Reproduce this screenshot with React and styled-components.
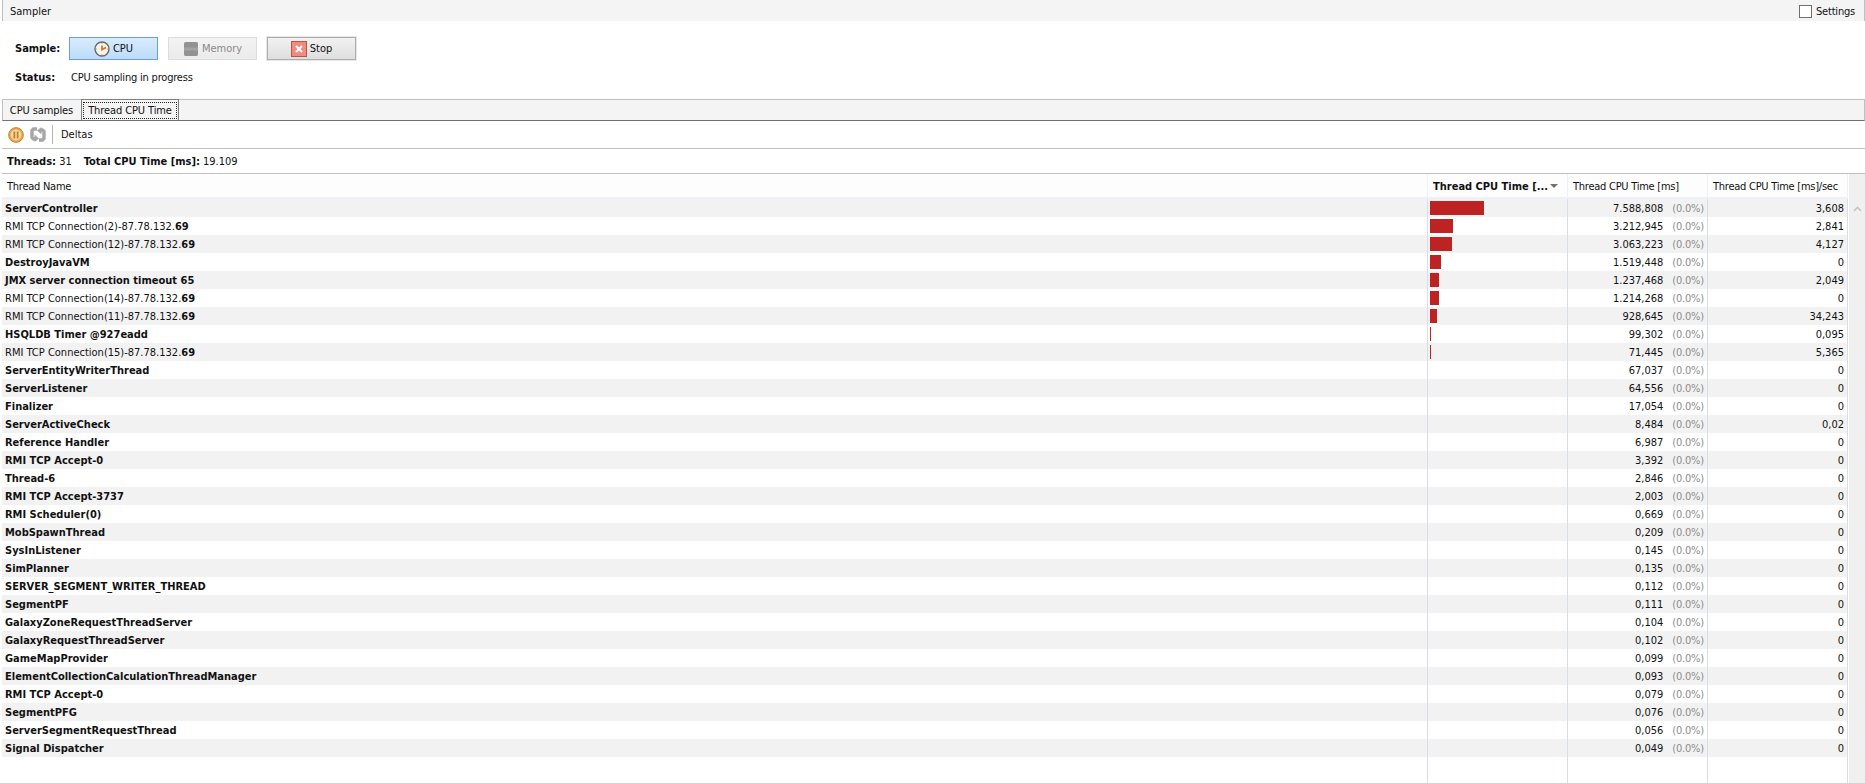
import React from 'react'
import styled, { createGlobalStyle } from 'styled-components'

const GlobalStyle = createGlobalStyle`
  html, body { margin: 0; padding: 0; background: #fff; overflow: hidden; }
  body { font-family: "DejaVu Sans Condensed", "DejaVu Sans", sans-serif; font-stretch: condensed; font-size: 11px; color: #111; }
`

const threads = [
  ['ServerController', 1, 54, '7.588,808', '3,608'],
  ['RMI TCP Connection(2)-87.78.132.', 0, 23, '3.212,945', '2,841'],
  ['RMI TCP Connection(12)-87.78.132.', 0, 22, '3.063,223', '4,127'],
  ['DestroyJavaVM', 1, 11, '1.519,448', '0'],
  ['JMX server connection timeout 65', 1, 9, '1.237,468', '2,049'],
  ['RMI TCP Connection(14)-87.78.132.', 0, 9, '1.214,268', '0'],
  ['RMI TCP Connection(11)-87.78.132.', 0, 7, '928,645', '34,243'],
  ['HSQLDB Timer @927eadd', 1, 1, '99,302', '0,095'],
  ['RMI TCP Connection(15)-87.78.132.', 0, 1, '71,445', '5,365'],
  ['ServerEntityWriterThread', 1, 0, '67,037', '0'],
  ['ServerListener', 1, 0, '64,556', '0'],
  ['Finalizer', 1, 0, '17,054', '0'],
  ['ServerActiveCheck', 1, 0, '8,484', '0,02'],
  ['Reference Handler', 1, 0, '6,987', '0'],
  ['RMI TCP Accept-0', 1, 0, '3,392', '0'],
  ['Thread-6', 1, 0, '2,846', '0'],
  ['RMI TCP Accept-3737', 1, 0, '2,003', '0'],
  ['RMI Scheduler(0)', 1, 0, '0,669', '0'],
  ['MobSpawnThread', 1, 0, '0,209', '0'],
  ['SysInListener', 1, 0, '0,145', '0'],
  ['SimPlanner', 1, 0, '0,135', '0'],
  ['SERVER_SEGMENT_WRITER_THREAD', 1, 0, '0,112', '0'],
  ['SegmentPF', 1, 0, '0,111', '0'],
  ['GalaxyZoneRequestThreadServer', 1, 0, '0,104', '0'],
  ['GalaxyRequestThreadServer', 1, 0, '0,102', '0'],
  ['GameMapProvider', 1, 0, '0,099', '0'],
  ['ElementCollectionCalculationThreadManager', 1, 0, '0,093', '0'],
  ['RMI TCP Accept-0', 1, 0, '0,079', '0'],
  ['SegmentPFG', 1, 0, '0,076', '0'],
  ['ServerSegmentRequestThread', 1, 0, '0,056', '0'],
  ['Signal Dispatcher', 1, 0, '0,049', '0'],
]

const Page = styled.div`
  width: 1865px;
  height: 783px;
  display: flex;
  flex-direction: column;
  overflow: hidden;
  padding-left: 2px;
  box-sizing: border-box;
`
const TitleBar = styled.div`
  height: 21px;
  flex: none;
  display: flex;
  align-items: center;
  justify-content: space-between;
  box-sizing: border-box;
  background: #f4f4f4;
  border-left: 1px solid #c0c0c0;
  border-right: 1px solid #c0c0c0;
  padding: 1px 9px 0 7px;
`
const CheckLabel = styled.div`
  display: flex;
  align-items: center;
  gap: 4px;
  letter-spacing: -0.2px;
`
const CheckBox = styled.span`
  width: 11px;
  height: 11px;
  background: #fff;
  border: 1px solid #707070;
`
const Controls = styled.div`
  height: 78px;
  flex: none;
  padding: 16px 0 0 13px;
  box-sizing: border-box;
`
const ControlRow = styled.div`
  display: flex;
  align-items: center;
  height: 23px;
  margin-bottom: ${p => p.$mb || 0}px;
`
const FieldLabel = styled.b`
  width: ${p => p.$w}px;
  flex: none;
`
const StatusText = styled.span`
  letter-spacing: -0.2px;
`
const SampleButton = styled.div`
  width: 89px;
  height: 23px;
  margin-right: 10px;
  box-sizing: border-box;
  display: flex;
  align-items: center;
  justify-content: center;
  gap: 3px;
  border: 1px solid ${p => p.$active ? '#6a9fd8' : p.$off ? '#dddddd' : '#adadad'};
  background: ${p => p.$active ? 'linear-gradient(#d9ebfd, #bcdcfa)' : p.$off ? 'linear-gradient(#f3f3f3, #ebebeb)' : 'linear-gradient(#f2f2f2, #dedede)'};
  box-shadow: ${p => p.$active || p.$off ? 'none' : '0 0 0 1px #e6e6e6'};
  color: ${p => p.$off ? '#8a8a8a' : '#111'};
`
const TabBar = styled.div`
  height: 22px;
  flex: none;
  display: flex;
  box-sizing: border-box;
  background: #f4f4f4;
  border: 1px solid #c0c0c0;
  border-bottom: 1px solid #707070;
`
const Tab = styled.div`
  height: 20px;
  width: ${p => p.$w}px;
  box-sizing: border-box;
  flex: none;
  display: flex;
  align-items: center;
  justify-content: center;
  letter-spacing: -0.1px;
`
const ActiveTab = styled(Tab)`
  height: 21px;
  margin-top: -1px;
  margin-left: 1px;
  background: #f4f4f4;
  border: 1px solid #808080;
  border-bottom: none;
`
const TabFocus = styled.span`
  outline: 1px dotted #222;
  width: 92px;
  height: 15px;
  display: flex;
  align-items: center;
  justify-content: center;
`
const Toolbar = styled.div`
  height: 28px;
  flex: none;
  box-sizing: border-box;
  display: flex;
  align-items: center;
  padding-left: 6px;
  gap: 6px;
  border-bottom: 1px solid #c0c0c0;
`
const Divider = styled.span`
  width: 1px;
  height: 19px;
  background: #b5b5b5;
  margin: 0 2px 0 0;
`
const Stats = styled.div`
  height: 25px;
  flex: none;
  box-sizing: border-box;
  display: flex;
  align-items: center;
  padding-left: 5px;
  gap: 12px;
  border-bottom: 1px solid #c0c0c0;
`
const Table = styled.div`
  flex: 1;
  display: grid;
  grid-template-columns: 1426px 140px 140px 140px 1fr;
  grid-template-rows: 25px repeat(31, 18px) 1fr;
  background: #fff;
`
const Head = styled.div`
  grid-row: 1;
  display: flex;
  align-items: center;
  justify-content: space-between;
  box-sizing: border-box;
  padding: 1px 9px 0 5px;
  background: #fdfdfd;
  border-bottom: 2px solid #eef2f8;
  border-right: 1px solid #eef2f8;
  font-weight: ${p => p.$sorted ? 700 : 400};
  letter-spacing: ${p => p.$sorted ? 0 : -0.25}px;
  white-space: nowrap;
`
const SortArrow = styled.span`
  width: 0;
  height: 0;
  border: 4px solid transparent;
  border-top: 4px solid #707070;
  border-bottom: none;
`
const Cell = styled.div`
  box-sizing: border-box;
  height: 18px;
  display: flex;
  align-items: center;
  background: ${p => p.$odd ? '#f2f2f2' : '#fff'};
  border-right: 1px solid #d7deea;
  white-space: nowrap;
`
const NameCell = styled(Cell)`
  padding-left: 3px;
  font-weight: ${p => p.$bold ? 700 : 400};
  b { font-weight: 700; }
`
const BarCell = styled(Cell)`
  padding-left: 2px;
`
const Bar = styled.div`
  height: 14px;
  background: #bd2323;
`
const NumCell = styled(Cell)`
  justify-content: flex-end;
  padding-right: 3px;
`
const Pct = styled.span`
  color: #8c8c8c;
  margin-left: 9px;
  letter-spacing: -0.2px;
`
const Filler = styled.div`
  grid-row: 33;
  border-right: 1px solid #d7deea;
`
const Scroll = styled.div`
  grid-column: 5;
  grid-row: 1 / -1;
  background: #f0f0f0;
  border-left: 1px solid #fff;
  display: flex;
  justify-content: center;
  padding-top: 32px;
`

const ClockIcon = () => (
  <svg width="16" height="16" viewBox="0 0 16 16">
    <circle cx="8" cy="8" r="7" fill="#f6f4ec" stroke="#6b6a66" strokeWidth="1.4" />
    <path d="M8 4.5V8.5L12 6.5" fill="none" stroke="#e07020" strokeWidth="1.7" />
    <path d="M8 2v1M8 13v1M2 8h1M13 8h1" stroke="#a8a8a8" strokeWidth="1" />
  </svg>
)
const ChipIcon = () => (
  <svg width="16" height="16" viewBox="0 0 16 16">
    <rect x="1" y="1" width="14" height="14" rx="2" fill="#8f8f8f" />
    <path d="M2 1v14M4 1v14M6 1v14M8 1v14M10 1v14M12 1v14M14 1v14" stroke="#9c9c9c" strokeWidth="0.6" />
    <rect x="1" y="6.5" width="14" height="3" fill="#a3a3a3" />
  </svg>
)
const StopIcon = () => (
  <svg width="16" height="16" viewBox="0 0 16 16">
    <rect x="0.5" y="0.5" width="15" height="15" fill="#f28a80" stroke="#b8544c" />
    <path d="M5 5L11 11M11 5L5 11" stroke="#fff" strokeWidth="2" />
  </svg>
)
const PauseIcon = () => (
  <svg width="16" height="16" viewBox="0 0 16 16">
    <circle cx="8" cy="8" r="7.4" fill="#e9a24e" stroke="#b77a2c" strokeWidth="0.8" />
    <circle cx="8" cy="8" r="5.4" fill="#f8d9a8" />
    <rect x="5.4" y="4.5" width="1.9" height="7" fill="#c0842f" />
    <rect x="8.7" y="4.5" width="1.9" height="7" fill="#c0842f" />
  </svg>
)
const RefreshIcon = () => (
  <svg width="16" height="17" viewBox="0 0 16 17">
    <path d="M7 3H3.5L2 4.5V11.5L3.5 13H5" fill="none" stroke="#a6a6a6" strokeWidth="3.4" />
    <path d="M4.5 8.5V16L9 12.5Z" fill="#a6a6a6" />
    <path d="M9 14H12.5L14 12.5V5.5L12.5 4H11" fill="none" stroke="#a6a6a6" strokeWidth="3.4" />
    <path d="M11.5 8.5V1L7 4.5Z" fill="#a6a6a6" />
  </svg>
)

const App = () => (
  <Page>
    <GlobalStyle />
    <TitleBar>
      <span>Sampler</span>
      <CheckLabel><CheckBox />Settings</CheckLabel>
    </TitleBar>
    <Controls>
      <ControlRow $mb={6}>
        <FieldLabel $w={54}>Sample:</FieldLabel>
        <SampleButton $active><ClockIcon />CPU</SampleButton>
        <SampleButton $off><ChipIcon />Memory</SampleButton>
        <SampleButton><StopIcon />Stop</SampleButton>
      </ControlRow>
      <ControlRow>
        <FieldLabel $w={56}>Status:</FieldLabel>
        <StatusText>CPU sampling in progress</StatusText>
      </ControlRow>
    </Controls>
    <TabBar>
      <Tab $w={77}>CPU samples</Tab>
      <ActiveTab $w={98}><TabFocus>Thread CPU Time</TabFocus></ActiveTab>
    </TabBar>
    <Toolbar>
      <PauseIcon />
      <RefreshIcon />
      <Divider />
      <span>Deltas</span>
    </Toolbar>
    <Stats>
      <span><b>Threads:</b> 31</span>
      <span><b>Total CPU Time [ms]:</b> 19.109</span>
    </Stats>
    <Table>
      <Head>Thread Name</Head>
      <Head $sorted>Thread CPU Time [...<SortArrow /></Head>
      <Head>Thread CPU Time [ms]</Head>
      <Head>Thread CPU Time [ms]/sec</Head>
      <Scroll>
        <svg width="9" height="6" viewBox="0 0 9 6"><path d="M1 5L4.5 1.5L8 5" fill="none" stroke="#c4c4c4" strokeWidth="1.6" /></svg>
      </Scroll>
      {threads.map(([name, bold, bar, ms, perSec], i) => (
        <React.Fragment key={i}>
          <NameCell $odd={i % 2 === 0} $bold={bold}>
            {name}{!bold && <b>69</b>}
          </NameCell>
          <BarCell $odd={i % 2 === 0}>
            {bar > 0 && <Bar style={{ width: bar }} />}
          </BarCell>
          <NumCell $odd={i % 2 === 0}>{ms}<Pct>(0.0%)</Pct></NumCell>
          <NumCell $odd={i % 2 === 0}>{perSec}</NumCell>
        </React.Fragment>
      ))}
      <Filler /><Filler /><Filler /><Filler />
    </Table>
  </Page>
)

export default App
